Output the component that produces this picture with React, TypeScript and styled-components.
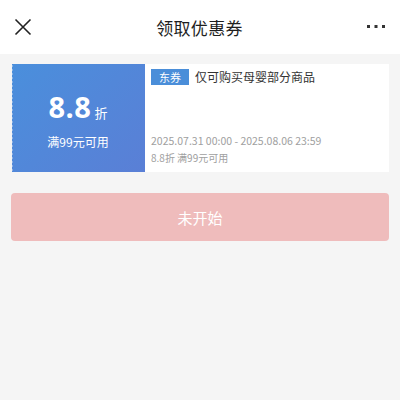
import React from "react";
import styled, { createGlobalStyle } from "styled-components";

const Global = createGlobalStyle`
  html, body { margin: 0; padding: 0; background: #f5f5f5; }
  body { font-family: "Noto Sans CJK SC", "Noto Sans", sans-serif; width: 400px; height: 400px; overflow: hidden; }
  * { box-sizing: border-box; }
`;

const Page = styled.div`
  width: 400px;
  height: 400px;
  background: #f5f5f5;
  display: flex;
  flex-direction: column;
`;

const Header = styled.div`
  height: 54px;
  background: #fff;
  display: flex;
  align-items: center;
  justify-content: space-between;
  padding: 0 14px 0 13px;
`;

const Title = styled.div`
  font-size: 17px;
  color: #1e1e1e;
  letter-spacing: 0.3px;
`;

const IconBox = styled.div`
  width: 20px;
  height: 20px;
  display: flex;
  align-items: center;
  justify-content: center;
`;

const Content = styled.div`
  padding: 10px 11px 0 11px;
  display: flex;
  flex-direction: column;
  gap: 21px;
`;

const Card = styled.div`
  height: 108px;
  display: flex;
  background: #fff;
`;

const Stub = styled.div`
  position: relative;
  width: 134px;
  background: linear-gradient(135deg, #4a8fdc 0%, #5a7fd6 100%);
  display: flex;
  flex-direction: column;
  align-items: center;
  justify-content: center;
  color: #fff;
  padding-top: 4px;
  &::before {
    content: "";
    position: absolute;
    left: -2px;
    top: 0;
    bottom: 0;
    width: 5px;
    background: radial-gradient(circle at 1.5px 50%, #f5f5f5 1.8px, transparent 2.2px);
    background-size: 5px 4px;
  }
`;

const Amount = styled.div`
  display: flex;
  align-items: baseline;
`;

const Big = styled.span`
  font-family: "Open Sans", "Noto Sans", sans-serif;
  font-weight: 700;
  font-size: 29px;
  line-height: 34px;
  letter-spacing: 0.5px;
`;

const Unit = styled.span`
  font-size: 13px;
  margin-left: 3px;
`;

const Cond = styled.div`
  font-size: 12px;
  margin-top: 9px;
`;

const Body = styled.div`
  flex: 1;
  display: flex;
  flex-direction: column;
  padding: 4px 6px 6px 6px;
`;

const TitleRow = styled.div`
  display: flex;
  align-items: center;
  gap: 6px;
`;

const Tag = styled.span`
  background: #4a8ed9;
  color: #fff;
  font-size: 11px;
  width: 38px;
  height: 16px;
  display: flex;
  align-items: center;
  justify-content: center;
`;

const Desc = styled.span`
  font-size: 12px;
  color: #333;
`;

const Spacer = styled.div`
  flex: 1;
`;

const Meta = styled.div<{ $size: number }>`
  font-size: ${(p) => p.$size}px;
  color: #a0a0a0;
  line-height: 17px;
`;

const Button = styled.div`
  height: 48px;
  border-radius: 4px;
  background: #efbcbc;
  color: #fff;
  font-size: 15px;
  display: flex;
  align-items: center;
  justify-content: center;
`;

export default function App() {
  return (
    <Page>
      <Global />
      <Header>
        <IconBox>
          <svg width="18" height="18" viewBox="0 0 18 18">
            <path d="M1.5 1.5 L16.5 16.5 M16.5 1.5 L1.5 16.5" stroke="#222" strokeWidth="1.6" fill="none" />
          </svg>
        </IconBox>
        <Title>领取优惠券</Title>
        <IconBox>
          <svg width="20" height="6" viewBox="0 0 20 6">
            <rect x="1" y="1" width="3" height="3" fill="#333" />
            <rect x="8.5" y="1" width="3" height="3" fill="#333" />
            <rect x="16" y="1" width="3" height="3" fill="#333" />
          </svg>
        </IconBox>
      </Header>
      <Content>
        <Card>
          <Stub>
            <Amount>
              <Big>8.8</Big>
              <Unit>折</Unit>
            </Amount>
            <Cond>满99元可用</Cond>
          </Stub>
          <Body>
            <TitleRow>
              <Tag>东券</Tag>
              <Desc>仅可购买母婴部分商品</Desc>
            </TitleRow>
            <Spacer />
            <Meta $size={10.5}>2025.07.31 00:00 - 2025.08.06 23:59</Meta>
            <Meta $size={10}>8.8折 满99元可用</Meta>
          </Body>
        </Card>
        <Button>未开始</Button>
      </Content>
    </Page>
  );
}
